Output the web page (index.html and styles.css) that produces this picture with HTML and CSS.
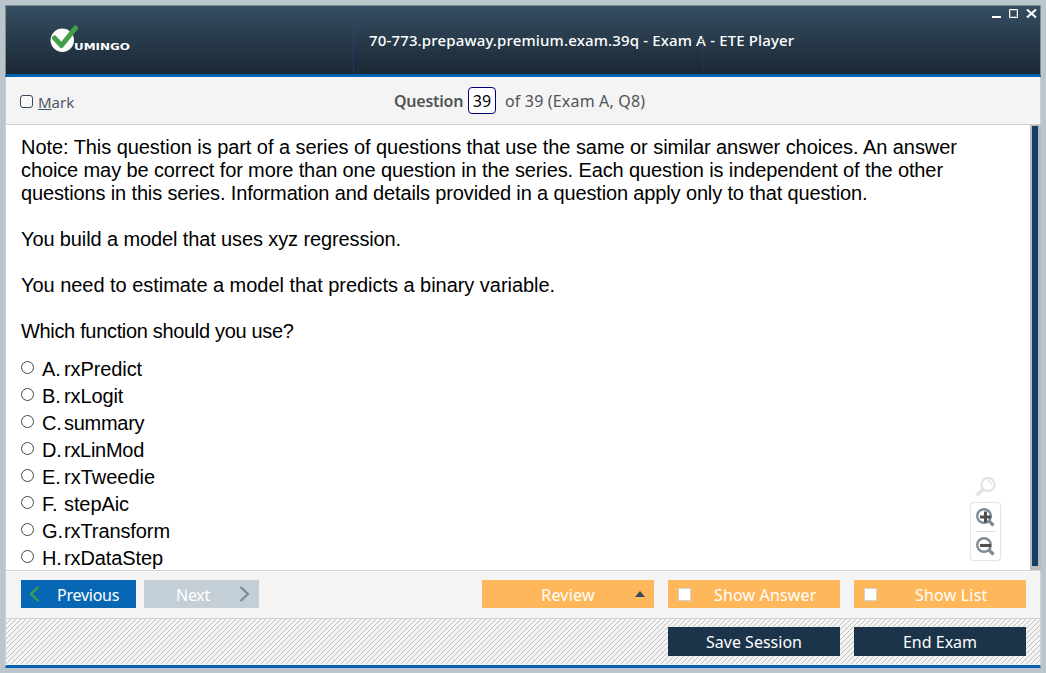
FILE: index.html
```html
<!DOCTYPE html>
<html lang="en">
<head>
<meta charset="utf-8">
<title>ETE Player</title>
<link rel="stylesheet" href="styles.css">
</head>
<body>
<div class="window">
  <header class="titlebar">
    <div class="brand">
      <svg class="brand-mark" width="29" height="28" viewBox="0 0 29 28"><circle cx="12.3" cy="15.3" r="11.7" fill="#fff"/><path d="M4.500 13 L11.500 20.500 L25.500 3" fill="none" stroke="#43a047" stroke-width="5" stroke-linecap="round" stroke-linejoin="round"/></svg>
      <svg class="brand-name" width="58" height="12" viewBox="0 0 58 12"><text x="0" y="9.5" textLength="56" lengthAdjust="spacingAndGlyphs">UMINGO</text></svg>
    </div>
    <h1 class="title"><span class="t-title">70-773.prepaway.premium.exam.39q - Exam A - ETE Player</span></h1>
    <div class="controls">
      <svg width="46" height="10" viewBox="0 0 46 10"><path d="M0 8h9" stroke="#fff" stroke-width="2"/><path d="M17.5.5h8v8h-8z" fill="none" stroke="#fff"/><path d="M18.5 1.5h6v6h-6z" fill="none" stroke="#77797a"/><path d="M35 .5l9 8M44 .5l-9 8" stroke="#fff" stroke-width="2"/></svg>
    </div>
  </header>
  <div class="toolbar">
    <label class="mark"><span class="mark-box"></span><span class="t-mark"><u>M</u>ark</span></label>
    <div class="counter"><b class="t-question">Question</b><span class="number">39</span><span class="t-of">of 39 (Exam A, Q8)</span></div>
  </div>
  <main class="content">
    <div class="question">
      <p><span class="l1">Note: This question is part of a series of questions that use the same or similar answer choices. An answer</span><br><span class="l2">choice may be correct for more than one question in the series. Each question is independent of the other</span><br><span class="l3">questions in this series. Information and details provided in a question apply only to that question.</span></p>
      <p><span class="l4">You build a model that uses xyz regression.</span></p>
      <p><span class="l5">You need to estimate a model that predicts a binary variable.</span></p>
      <p><span class="l6">Which function should you use?</span></p>
      <ul class="answers">
        <li><i class="radio"></i><span class="letter">A.</span><span>rxPredict</span></li>
        <li><i class="radio"></i><span class="letter">B.</span><span>rxLogit</span></li>
        <li><i class="radio"></i><span class="letter">C.</span><span class="tight">summary</span></li>
        <li><i class="radio"></i><span class="letter">D.</span><span class="tight">rxLinMod</span></li>
        <li><i class="radio"></i><span class="letter">E.</span><span class="wide">rxTweedie</span></li>
        <li><i class="radio"></i><span class="letter">F.</span><span>stepAic</span></li>
        <li><i class="radio"></i><span class="letter">G.</span><span>rxTransform</span></li>
        <li><i class="radio"></i><span class="letter">H.</span><span>rxDataStep</span></li>
      </ul>
    </div>
    <div class="scrollbar"><div class="thumb"></div></div>
    <div class="zoom">
      <svg class="lens" width="21" height="21" viewBox="0 0 21 21" fill="none" stroke="#e1e1e1"><circle cx="13" cy="7.500" r="6.600" stroke-width="2"/><path d="M8 12.500l-6.500 6" stroke-width="3.200"/><path d="M12.500 4q3.500 0 4 3.500" stroke-width="1.300"/></svg>
      <div class="zoom-box">
        <svg width="19" height="19" viewBox="0 0 19 19" fill="none"><circle cx="8" cy="8" r="6.800" stroke="#7e8b94" stroke-width="2.400"/><path d="M12.500 12.500l5 5" stroke="#7e8b94" stroke-width="3.200"/><path d="M4 9h11M9.500 3.500v11" stroke="#4e4e4e" stroke-width="3"/></svg>
        <svg width="19" height="19" viewBox="0 0 19 19" fill="none"><circle cx="8" cy="8" r="6.800" stroke="#7e8b94" stroke-width="2.400"/><path d="M12.500 12.500l5 5" stroke="#7e8b94" stroke-width="3.200"/><path d="M4 8.500h11" stroke="#4e4e4e" stroke-width="3"/></svg>
      </div>
    </div>
  </main>
  <nav class="navbar">
    <button class="btn prev"><svg width="11" height="18" viewBox="0 0 11 18"><path d="M9.500 2L2 9l7.500 7" fill="none" stroke="#43a047" stroke-width="2.200"/></svg><span class="t-prev">Previous</span></button>
    <button class="btn next"><span class="t-next">Next</span><svg width="11" height="18" viewBox="0 0 11 18"><path d="M1.500 2L9 9l-7.500 7" fill="none" stroke="#7e8993" stroke-width="2.200"/></svg></button>
    <button class="btn orange review"><span class="t-review">Review</span><svg width="10" height="6" viewBox="0 0 10 6"><path d="M0 6L5 0l5 6z" fill="#34495e"/></svg></button>
    <button class="btn orange check"><i></i><span class="t-answer">Show Answer</span></button>
    <button class="btn orange check"><i></i><span class="t-list">Show List</span></button>
  </nav>
  <footer class="footer">
    <svg class="hatch" width="1034" height="45" shape-rendering="crispEdges"><defs><pattern id="hatch" width="5" height="5" patternUnits="userSpaceOnUse"><path d="M4 0h1v1h-1zM3 1h1v1h-1zM2 2h1v1h-1zM1 3h1v1h-1zM0 4h1v1h-1z" fill="#c0c0c0"/></pattern></defs><rect width="1034" height="45" fill="url(#hatch)"/></svg>
    <button class="btn dark"><span class="t-save">Save Session</span></button>
    <button class="btn dark"><span class="t-end">End Exam</span></button>
  </footer>
</div>
</body>
</html>
```
FILE: styles.css
```css
* { box-sizing: border-box; }
body { margin: 0; width: 1046px; height: 673px; padding: 5px; background: #bac6cc; overflow: hidden; font-family: "Noto Sans", sans-serif; white-space: nowrap; }
.window { width: 1036px; height: 663px; display: flex; flex-direction: column; background: #f4f4f4; }
.titlebar { height: 72px; border: 1px solid #7f8f96; border-bottom: 3px solid #0062b3; background: linear-gradient(#364e63, #1a2733); display: grid; grid-template-columns: 348px 348px 1fr; }
.brand { border-right: 1px dotted #34418f; padding: 19px 0 0 44px; display: flex; align-items: flex-start; }
.brand-name { margin: 15px 0 0 -5px; fill: #fff; font: bold 9px "DejaVu Sans", sans-serif; }
.title { margin: 0; min-width: 0; padding-top: 24px; padding-left: 15px; color: #fff; font-size: 15px; font-weight: 500; line-height: 20px; }
.t-title { letter-spacing: 0.148px; }
.controls { border-left: 1px dotted #2e4062; padding: 3px 2px 0 0; display: flex; justify-content: flex-end; }
.toolbar { height: 48px; border: 1px solid #cfcfcf; border-top: 0; display: flex; align-items: flex-start; color: #505457; font-size: 16px; line-height: 22px; }
.mark { display: flex; width: 388px; padding: 14px 0 0 14px; gap: 5px; color: #4a5866; font-size: 15px; }
.mark-box { width: 13px; height: 13px; margin-top: 4px; border: 1px solid #34495e; border-radius: 3px; background: #f8f8f8; }
.counter { display: flex; padding-top: 10px; line-height: 29px; }
.counter b { font-weight: 600; }
.t-question { width: 74px; letter-spacing: -0.25px; }
.t-of { letter-spacing: 0.17px; }
.number { width: 28px; height: 27px; border: 1px solid #00007c; border-radius: 4px; background: #fff; color: #000; text-align: center; line-height: 26px; font-size: 16px; margin-right: 9px; }
.content { height: 445px; position: relative; display: flex; background: #fff; border-left: 1px solid #d0d0d0; font: 20px/23px "Liberation Sans", Arial, sans-serif; color: #000; }
.question { flex: 1; padding: 11px 0 0 15px; overflow: hidden; }
.question p { margin: 0 0 23px; }
.question p:last-of-type { margin-bottom: 13px; }
.l1 { letter-spacing: -0.06px; }
.l2 { letter-spacing: -0.114px; }
.l3 { letter-spacing: -0.14px; }
.l4 { letter-spacing: -0.116px; }
.l5 { letter-spacing: -0.035px; }
.l6 { letter-spacing: -0.33px; }
.answers { list-style: none; margin: 0; padding: 0; letter-spacing: -0.1px; }
.answers li { height: 27px; line-height: 27px; display: flex; }
.tight { letter-spacing: -0.28px; }
.wide { letter-spacing: 0; }
.radio { width: 13px; height: 13px; border: 1px solid #444; border-radius: 50%; margin: 5px 8px 0 0; }
.letter { width: 22px; }
.scrollbar { width: 11px; border: solid #bcbbb9; border-width: 1px 2px 4px; background: #bcbbb9; }
.thumb { width: 6px; height: 100%; background: #0d406b; }
.zoom { position: absolute; left: 964px; top: 352px; }
.lens { display: block; margin-left: 5px; }
.zoom-box { width: 31px; height: 59px; margin-top: 4px; border: 1px solid #e4e4e4; box-shadow: 0 0 1px #ccc; border-radius: 4px; display: flex; flex-direction: column; align-items: center; padding-top: 5px; gap: 10px; background: linear-gradient(#e0e0e0, #e0e0e0) center 28px / 19px 1px no-repeat; }
.zoom-box svg { flex: none; display: block; }
.navbar { height: 49px; border: 1px solid #d0d0d0; padding: 9px 14px 0 15px; box-shadow: inset 0 1px #fff; display: flex; }
.btn { height: 28px; border: 0; padding: 0; color: #fff; font: 16px/28px "Noto Sans", sans-serif; display: flex; align-items: center; }
.navbar .btn span { padding-top: 2px; }
.prev { width: 115px; background: #0867b5; padding-left: 8px; }
.t-prev { margin-left: 17px; letter-spacing: -0.25px; }
.next { width: 115px; margin-left: 8px; background: #c3ced6; padding-left: 32px; }
.t-next { letter-spacing: -0.25px; }
.next svg { margin-left: auto; margin-right: 9px; }
.orange { width: 172px; background: #ffb75b; margin-left: 14px; justify-content: center; position: relative; }
.review { margin-left: auto; }
.t-review { letter-spacing: 0.2px; }
.review svg { position: absolute; right: 9px; top: 11px; }
.check { justify-content: flex-start; }
.check i { width: 13px; height: 13px; border: 1px solid #d3d3d3; background: #fff; margin-left: 10px; }
.t-answer { margin-left: 23px; letter-spacing: 0.15px; }
.t-list { margin-left: 38px; letter-spacing: 0.2px; }
.footer { position: relative; flex: 1; border: 1px solid #d0d0d0; border-top: 0; border-bottom: 3px solid #0862b0; padding: 8px 14px 0 0; display: flex; justify-content: flex-end; gap: 14px; }
.hatch { position: absolute; left: 0; top: 0; }
.dark { position: relative; width: 172px; height: 29px; background: #1b344a; justify-content: center; }
```
